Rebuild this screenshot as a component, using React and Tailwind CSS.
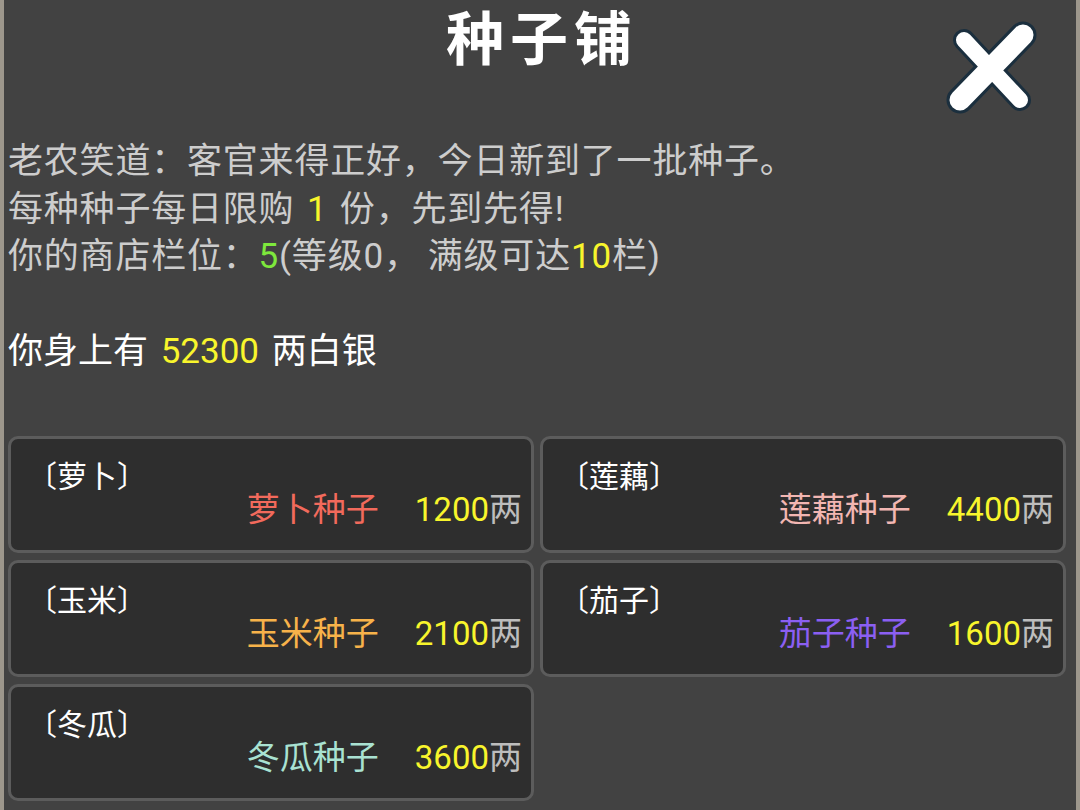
import React from "react";

const seeds = [
  { crop: "萝卜", name: "萝卜种子", price: 1200, color: "text-[#f26a5c]" },
  { crop: "莲藕", name: "莲藕种子", price: 4400, color: "text-[#f2b6b2]" },
  { crop: "玉米", name: "玉米种子", price: 2100, color: "text-[#f7b24a]" },
  { crop: "茄子", name: "茄子种子", price: 1600, color: "text-[#8b5ff2]" },
  { crop: "冬瓜", name: "冬瓜种子", price: 3600, color: "text-[#a9e2d2]" },
];

// brush-style close cross
function CloseMark() {
  return (
    <svg width="96" height="96" viewBox="0 0 96 96">
      <g strokeLinecap="round" fill="none">
        <path d="M20 20 L76 80" stroke="#1b2f3e" strokeWidth="22" />
        <path d="M79 15 L16 80" stroke="#1b2f3e" strokeWidth="27" />
        <path d="M20 20 L76 80" stroke="#ffffff" strokeWidth="16" />
        <path d="M79 15 L16 80" stroke="#ffffff" strokeWidth="21" />
      </g>
    </svg>
  );
}

function SeedCard({ seed }) {
  return (
    <div className="h-[117px] rounded-[10px] border-[3px] border-[#5c5c5c] bg-[#2e2e2e] flex flex-col pl-[16px] pr-[9px]">
      <div className="mt-[20px] text-[30px] leading-[36px] text-white">〔{seed.crop}〕</div>
      <div className="flex justify-end items-center text-[33px] leading-[40px] -mt-[5px]">
        <span className={seed.color}>{seed.name}</span>
        <span className="ml-[36px] text-[#f8f52c]">{seed.price}</span>
        <span className="text-[#bdbdbd]">两</span>
      </div>
    </div>
  );
}

export default function App() {
  return (
    <div
      className="w-[1080px] h-[810px] bg-[#424242] flex overflow-hidden"
      style={{ fontFamily: 'Roboto, "Noto Sans CJK SC", sans-serif' }}
    >
      <div className="w-[4px] bg-[#9d978c]" />
      <div className="flex-1 flex flex-col pl-[4px] pr-[8px]">
        {/* header */}
        <div className="relative h-[138px]">
          <div className="text-center text-white text-[58px] leading-[80px] font-bold tracking-[6px] pl-[8px]">
            种子铺
          </div>
          <button className="absolute right-[28px] top-[20px]">
            <CloseMark />
          </button>
        </div>

        {/* shopkeeper text */}
        <div className="text-[35px] leading-[47.5px] tracking-[0.8px] text-[#cdcdcd]">
          <div>老农笑道：客官来得正好，今日新到了一批种子。</div>
          <div>
            每种种子每日限购 <span className="px-[3px] text-[#f8f52c]">1</span> 份，先到先得!
          </div>
          <div>
            你的商店栏位：<span className="text-[#7ee83c]">5</span>(等级0，<span className="pl-[8px]">满级可达</span>
            <span className="text-[#f8f52c]">10</span>栏)
          </div>
        </div>

        <div className="mt-[47px] text-[35px] leading-[48px] text-white">
          你身上有 <span className="px-[4px] text-[#f8f52c]">52300</span> 两白银
        </div>

        {/* seed list */}
        <div className="mt-[60px] grid grid-cols-2 gap-x-[6px] gap-y-[7px] w-[1058px]">
          {seeds.map((s) => (
            <SeedCard key={s.crop} seed={s} />
          ))}
        </div>
      </div>
      <div className="w-[4px] bg-[#9d978c]" />
    </div>
  );
}
